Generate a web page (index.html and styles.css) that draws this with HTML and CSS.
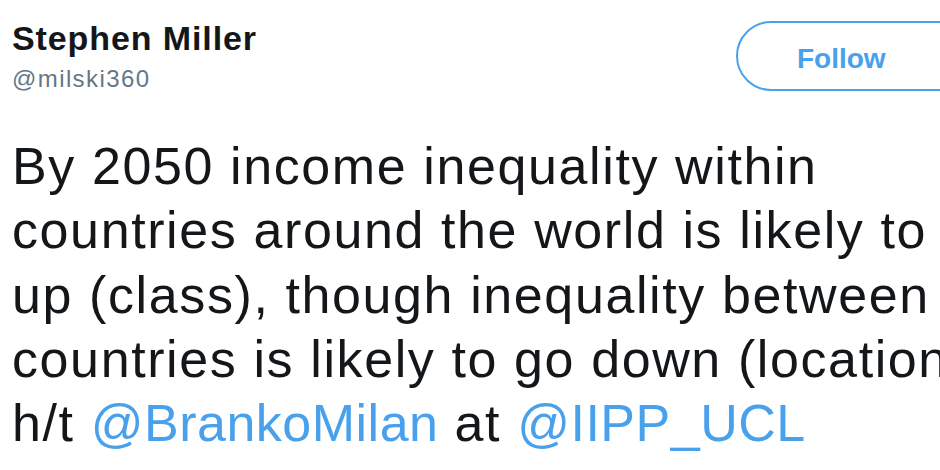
FILE: index.html
```html
<!DOCTYPE html>
<html>
<head>
<meta charset="utf-8">
<link rel="stylesheet" href="styles.css">
</head>
<body>
<div class="tweet">
  <div class="header">
    <div class="user">
      <div class="name">Stephen Miller</div>
      <div class="handle">@milski360</div>
    </div>
    <button class="follow">Follow</button>
  </div>
  <div class="text">
    <div class="line">By 2050 income inequality within</div>
    <div class="line">countries around the world is likely to go</div>
    <div class="line">up (class), though inequality between</div>
    <div class="line">countries is likely to go down (location).</div>
    <div class="line">h/t <span class="link">@BrankoMilan</span> at <span class="link">@IIPP_UCL</span></div>
  </div>
</div>
</body>
</html>
```
FILE: styles.css
```css
html, body {
  margin: 0;
  padding: 0;
  background: #ffffff;
  overflow: hidden;
}
body {
  width: 940px;
  height: 470px;
  font-family: "Liberation Sans", Arial, sans-serif;
  color: #14171a;
}
.tweet {
  padding: 0 0 0 12px;
  width: 1100px;
}
.header {
  display: flex;
  align-items: flex-start;
  width: 928px;
}
.user {
  flex: 1;
  padding-top: 18px;
}
.name {
  font-weight: bold;
  font-size: 34px;
  line-height: 40px;
  letter-spacing: 0.9px;
}
.handle {
  font-size: 24px;
  line-height: 30px;
  color: #657786;
  margin-top: 6px;
  letter-spacing: 1.4px;
}
.follow {
  margin-top: 21px;
  margin-right: -40px;
  width: 244px;
  height: 70px;
  border: 2px solid #4aa1eb;
  border-radius: 35px;
  background: #fff;
  color: #4aa1eb;
  font-family: "Liberation Sans", Arial, sans-serif;
  font-weight: bold;
  font-size: 28px;
  text-align: left;
  padding: 5px 0 0 59px;
  flex: none;
}
.text {
  margin-top: 40px;
  font-size: 52px;
  line-height: 64.25px;
  letter-spacing: 1.6px;
  white-space: nowrap;
}
.link {
  color: #4aa1eb;
  letter-spacing: 0.5px;
}
```
